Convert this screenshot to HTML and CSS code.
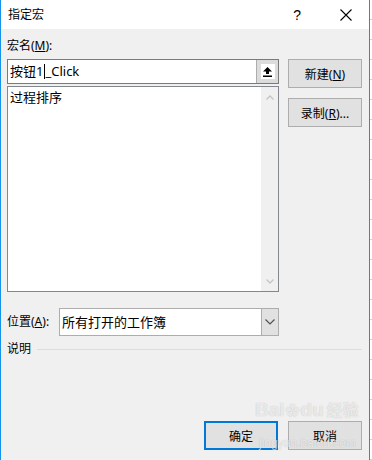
FILE: index.html
```html
<!DOCTYPE html>
<html lang="zh-CN">
<head>
    <meta charset="UTF-8">
    <title>指定宏</title>
    <link rel="stylesheet" href="styles.css">
</head>
<body>
    <div class="screen">
        <div class="dialog">
            <div class="titlebar">
                <span class="title">指定宏</span>
                <span class="help">?</span>
                <svg class="close" width="12" height="12" viewBox="0 0 12 12">
                    <path d="M0.5 0.5 L11.5 11.5 M11.5 0.5 L0.5 11.5" stroke="#000" stroke-width="1.1" fill="none"/>
                </svg>
            </div>

            <div class="content">
                <div class="label">宏名(<u>M</u>):</div>

                <div class="main-row">
                    <div class="left-col">
                        <div class="name-input">
                            <span class="name-text">按钮1<span class="caret"></span>_Click</span>
                            <span class="collapse-btn">
                                <span class="collapse-face">
                                    <svg width="9" height="10" viewBox="0 0 9 10">
                                        <path d="M4.5 0 L9 4.5 L6 4.5 L6 7 L3 7 L3 4.5 L0 4.5 Z" fill="#000"/>
                                        <rect x="0" y="8.5" width="9" height="1.5" fill="#000"/>
                                    </svg>
                                </span>
                            </span>
                        </div>
                        <div class="listbox">
                            <div class="items">
                                <div class="item">过程排序</div>
                            </div>
                            <div class="scrollbar">
                                <svg width="8" height="5" viewBox="0 0 8 5">
                                    <path d="M0.5 4.5 L4 1 L7.5 4.5" stroke="#c4c4c4" stroke-width="1.3" fill="none"/>
                                </svg>
                                <svg width="8" height="5" viewBox="0 0 8 5">
                                    <path d="M0.5 0.5 L4 4 L7.5 0.5" stroke="#c4c4c4" stroke-width="1.3" fill="none"/>
                                </svg>
                            </div>
                        </div>
                    </div>
                    <div class="right-col">
                        <button class="btn">新建(<u>N</u>)</button>
                        <button class="btn">录制(<u>R</u>)...</button>
                    </div>
                </div>

                <div class="location-row">
                    <span class="label">位置(<u>A</u>):</span>
                    <div class="select">
                        <span class="select-text">所有打开的工作簿</span>
                        <span class="select-btn">
                            <svg width="10" height="6" viewBox="0 0 10 6">
                                <path d="M0.5 0.5 L5 5 L9.5 0.5" stroke="#505050" stroke-width="1.2" fill="none"/>
                            </svg>
                        </span>
                    </div>
                </div>

                <div class="desc-row">
                    <span class="label">说明</span>
                    <span class="rule"></span>
                </div>

                <div class="footer">
                    <button class="btn btn-default">确定</button>
                    <button class="btn">取消</button>
                </div>
            </div>

            <div class="watermark">
                <div class="wm-big">Bai<span class="paw">✿</span>du<span class="wm-cn">经验</span></div>
                <div class="wm-small">jingyan.baidu.com</div>
            </div>
        </div>
        <div class="sheet"></div>
    </div>
</body>
</html>
```

FILE: styles.css
```css
body {
    margin: 0;
    font-family: "Noto Sans", "Noto Sans CJK SC", sans-serif;
    font-size: 12px;
    color: #000;
    background: #fff;
}
u {
    text-decoration: underline;
    text-underline-offset: 1px;
}
.screen {
    display: flex;
    width: 372px;
    height: 460px;
    overflow: hidden;
}
.dialog {
    position: relative;
    width: 370px;
    height: 460px;
    box-sizing: border-box;
    border-left: 1px solid #1592ea;
    border-right: 1px solid #1592ea;
    background: #f0f0f0;
    display: flex;
    flex-direction: column;
}
.sheet {
    width: 2px;
    height: 460px;
    background: repeating-linear-gradient(to bottom, #fff 0, #fff 19px, #d4d4d4 19px, #d4d4d4 20px);
}
.titlebar {
    height: 29px;
    background: #fff;
    display: flex;
    align-items: center;
    padding-left: 7px;
    padding-right: 17px;
}
.title {
    flex: 1;
    font-size: 12px;
    line-height: 16px;
}
.help {
    font-family: "Liberation Sans", sans-serif;
    font-size: 14px;
    margin-right: 39px;
}
.close {
    display: block;
}
.content {
    flex: 1;
    display: flex;
    flex-direction: column;
    padding: 9px 7px 10px 6px;
}
.label {
    font-size: 12px;
    line-height: 16px;
    white-space: nowrap;
}
.main-row {
    display: flex;
    gap: 9px;
    margin-top: 5px;
}
.left-col {
    width: 272px;
    display: flex;
    flex-direction: column;
    gap: 2px;
}
.name-input {
    height: 25px;
    box-sizing: border-box;
    border: 1px solid #7a7a7a;
    background: #fff;
    display: flex;
}
.name-text {
    flex: 1;
    padding-left: 2px;
    font-size: 13px;
    line-height: 23px;
    white-space: nowrap;
}
.caret {
    display: inline-block;
    width: 1px;
    height: 15px;
    background: #000;
    vertical-align: -3px;
    margin: 0 0 0 1px;
}
.collapse-btn {
    width: 21px;
    background: #dcdcdc;
    border-left: 1px solid #adadad;
    display: flex;
    align-items: center;
    justify-content: center;
}
.collapse-face {
    width: 14px;
    height: 15px;
    background: #fff;
    display: flex;
    align-items: center;
    justify-content: center;
}
.collapse-face svg {
    display: block;
}
.listbox {
    height: 206px;
    box-sizing: border-box;
    border: 1px solid #828790;
    background: #fff;
    display: flex;
}
.items {
    flex: 1;
    padding: 2px 2px;
}
.item {
    font-size: 13px;
    line-height: 17px;
}
.scrollbar {
    width: 17px;
    background: #f0f0f0;
    display: flex;
    flex-direction: column;
    justify-content: space-between;
    align-items: center;
    padding: 8px 0 7px;
}
.scrollbar svg {
    display: block;
}
.right-col {
    width: 74px;
    display: flex;
    flex-direction: column;
    gap: 10px;
}
.btn {
    width: 74px;
    height: 29px;
    box-sizing: border-box;
    border: 1px solid #adadad;
    background: #e1e1e1;
    font-family: inherit;
    font-size: 12px;
    color: #000;
    padding: 0;
}
.btn-default {
    border: 2px solid #0078d7;
}
.location-row {
    display: flex;
    align-items: center;
    margin-top: 16px;
}
.location-row .label {
    width: 52px;
}
.select {
    width: 220px;
    height: 28px;
    box-sizing: border-box;
    border: 1px solid #adadad;
    background: #fff;
    display: flex;
}
.select-text {
    flex: 1;
    padding-left: 2px;
    font-size: 13px;
    line-height: 26px;
}
.select-btn {
    width: 16px;
    background: #e1e1e1;
    border-left: 1px solid #adadad;
    display: flex;
    align-items: center;
    justify-content: center;
}
.select-btn svg {
    display: block;
}
.desc-row {
    display: flex;
    align-items: center;
    margin-top: 5px;
}
.rule {
    flex: 1;
    height: 1px;
    background: #dcdcdc;
    margin-left: 6px;
}
.footer {
    margin-top: auto;
    display: flex;
    justify-content: flex-end;
    gap: 10px;
}
.watermark {
    position: absolute;
    left: 254px;
    top: 398px;
    white-space: nowrap;
    color: rgba(255, 255, 255, 0.7);
    text-shadow: 0 0 1px rgba(0, 0, 0, 0.25);
    pointer-events: none;
}
.wm-big {
    font-family: "Liberation Sans", "Noto Sans CJK SC", sans-serif;
    font-size: 19px;
    font-weight: bold;
    line-height: 24px;
}
.paw {
    font-size: 14px;
    margin: 0 1px;
}
.wm-cn {
    font-size: 16px;
    margin-left: 3px;
}
.wm-small {
    font-family: "Liberation Sans", sans-serif;
    font-size: 12px;
    line-height: 14px;
    margin-top: 13px;
    margin-left: 4px;
}
```
